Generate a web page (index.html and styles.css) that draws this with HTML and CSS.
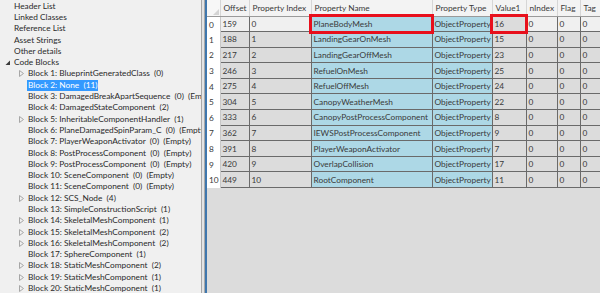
FILE: index.html
```html
<!DOCTYPE html>
<html>
<head>
  <meta name="viewport" content="width=device-width, initial-scale=1">
  <title>Asset Viewer</title>
  <link rel="stylesheet" href="styles.css">
</head>
<body>
  <div id="tree">
    <div class="node"><span class="exp"></span><span class="label">Header List</span></div>
    <div class="node"><span class="exp"></span><span class="label">Linked Classes</span></div>
    <div class="node"><span class="exp"></span><span class="label">Reference List</span></div>
    <div class="node"><span class="exp"></span><span class="label">Asset Strings</span></div>
    <div class="node"><span class="exp"></span><span class="label">Other details</span></div>
    <div class="node"><span class="exp"><svg width="6" height="6" viewBox="0 0 6 6"><polygon points="5,0.5 5,5 0.5,5" fill="#3c3c3c"/></svg></span><span class="label">Code Blocks</span></div>
    <div class="node child"><span class="exp"><svg class="closed" width="5" height="7" viewBox="0 0 5 7"><polygon points="0.5,0.5 4.5,3.5 0.5,6.5" fill="none" stroke="#a6a6a6"/></svg></span><span class="label">Block 1: BlueprintGeneratedClass  (0)</span></div>
    <div class="node child"><span class="exp"></span><span class="label selected">Block 2: None  (11)</span></div>
    <div class="node child"><span class="exp"></span><span class="label">Block 3: DamagedBreakApartSequence  (0)  (Empty)</span></div>
    <div class="node child"><span class="exp"></span><span class="label">Block 4: DamagedStateComponent  (2)</span></div>
    <div class="node child"><span class="exp"><svg class="closed" width="5" height="7" viewBox="0 0 5 7"><polygon points="0.5,0.5 4.5,3.5 0.5,6.5" fill="none" stroke="#a6a6a6"/></svg></span><span class="label">Block 5: InheritableComponentHandler  (1)</span></div>
    <div class="node child"><span class="exp"></span><span class="label">Block 6: PlaneDamagedSpinParam_C  (0)  (Empty)</span></div>
    <div class="node child"><span class="exp"></span><span class="label">Block 7: PlayerWeaponActivator  (0)  (Empty)</span></div>
    <div class="node child"><span class="exp"></span><span class="label">Block 8: PostProcessComponent  (0)  (Empty)</span></div>
    <div class="node child"><span class="exp"></span><span class="label">Block 9: PostProcessComponent  (0)  (Empty)</span></div>
    <div class="node child"><span class="exp"></span><span class="label">Block 10: SceneComponent  (0)  (Empty)</span></div>
    <div class="node child"><span class="exp"></span><span class="label">Block 11: SceneComponent  (0)  (Empty)</span></div>
    <div class="node child"><span class="exp"><svg class="closed" width="5" height="7" viewBox="0 0 5 7"><polygon points="0.5,0.5 4.5,3.5 0.5,6.5" fill="none" stroke="#a6a6a6"/></svg></span><span class="label">Block 12: SCS_Node  (4)</span></div>
    <div class="node child"><span class="exp"></span><span class="label">Block 13: SimpleConstructionScript  (1)</span></div>
    <div class="node child"><span class="exp"><svg class="closed" width="5" height="7" viewBox="0 0 5 7"><polygon points="0.5,0.5 4.5,3.5 0.5,6.5" fill="none" stroke="#a6a6a6"/></svg></span><span class="label">Block 14: SkeletalMeshComponent  (1)</span></div>
    <div class="node child"><span class="exp"><svg class="closed" width="5" height="7" viewBox="0 0 5 7"><polygon points="0.5,0.5 4.5,3.5 0.5,6.5" fill="none" stroke="#a6a6a6"/></svg></span><span class="label">Block 15: SkeletalMeshComponent  (2)</span></div>
    <div class="node child"><span class="exp"><svg class="closed" width="5" height="7" viewBox="0 0 5 7"><polygon points="0.5,0.5 4.5,3.5 0.5,6.5" fill="none" stroke="#a6a6a6"/></svg></span><span class="label">Block 16: SkeletalMeshComponent  (2)</span></div>
    <div class="node child"><span class="exp"></span><span class="label">Block 17: SphereComponent  (1)</span></div>
    <div class="node child"><span class="exp"><svg class="closed" width="5" height="7" viewBox="0 0 5 7"><polygon points="0.5,0.5 4.5,3.5 0.5,6.5" fill="none" stroke="#a6a6a6"/></svg></span><span class="label">Block 18: StaticMeshComponent  (2)</span></div>
    <div class="node child"><span class="exp"><svg class="closed" width="5" height="7" viewBox="0 0 5 7"><polygon points="0.5,0.5 4.5,3.5 0.5,6.5" fill="none" stroke="#a6a6a6"/></svg></span><span class="label">Block 19: StaticMeshComponent  (1)</span></div>
    <div class="node child"><span class="exp"><svg class="closed" width="5" height="7" viewBox="0 0 5 7"><polygon points="0.5,0.5 4.5,3.5 0.5,6.5" fill="none" stroke="#a6a6a6"/></svg></span><span class="label">Block 20: StaticMeshComponent  (1)</span></div>
  </div>

  <div id="splitter"></div>

  <div id="grid">
    <table>
      <colgroup>
        <col class="c-hdr"><col class="c-offset"><col class="c-index"><col class="c-name"><col class="c-type"><col class="c-value"><col class="c-nindex"><col class="c-flag"><col class="c-tag">
      </colgroup>
      <thead>
        <tr>
          <th class="corner"><svg width="6" height="6" viewBox="0 0 6 6"><polygon points="6,0 6,6 0,6" fill="#d4d4d4"/></svg></th>
          <th>Offset</th>
          <th>Property Index</th>
          <th>Property Name</th>
          <th>Property Type</th>
          <th>Value1</th>
          <th>nIndex</th>
          <th>Flag</th>
          <th>Tag</th>
        </tr>
      </thead>
      <tbody>
        <tr class="current"><td class="rownum">0</td><td>159</td><td>0</td><td class="blue focus">PlaneBodyMesh</td><td class="blue">ObjectProperty</td><td class="focus dim">16</td><td>0</td><td>0</td><td>0</td></tr>
        <tr><td class="rownum">1</td><td>188</td><td>1</td><td class="blue">LandingGearOnMesh</td><td class="blue">ObjectProperty</td><td>15</td><td>0</td><td>0</td><td>0</td></tr>
        <tr><td class="rownum">2</td><td>217</td><td>2</td><td class="blue">LandingGearOffMesh</td><td class="blue">ObjectProperty</td><td>23</td><td>0</td><td>0</td><td>0</td></tr>
        <tr><td class="rownum">3</td><td>246</td><td>3</td><td class="blue">RefuelOnMesh</td><td class="blue">ObjectProperty</td><td>25</td><td>0</td><td>0</td><td>0</td></tr>
        <tr><td class="rownum">4</td><td>275</td><td>4</td><td class="blue">RefuelOffMesh</td><td class="blue">ObjectProperty</td><td>24</td><td>0</td><td>0</td><td>0</td></tr>
        <tr><td class="rownum">5</td><td>304</td><td>5</td><td class="blue">CanopyWeatherMesh</td><td class="blue">ObjectProperty</td><td>22</td><td>0</td><td>0</td><td>0</td></tr>
        <tr><td class="rownum">6</td><td>333</td><td>6</td><td class="blue">CanopyPostProcessComponent</td><td class="blue">ObjectProperty</td><td>8</td><td>0</td><td>0</td><td>0</td></tr>
        <tr><td class="rownum">7</td><td>362</td><td>7</td><td class="blue">IEWSPostProcessComponent</td><td class="blue">ObjectProperty</td><td>9</td><td>0</td><td>0</td><td>0</td></tr>
        <tr><td class="rownum">8</td><td>391</td><td>8</td><td class="blue">PlayerWeaponActivator</td><td class="blue">ObjectProperty</td><td>7</td><td>0</td><td>0</td><td>0</td></tr>
        <tr><td class="rownum">9</td><td>420</td><td>9</td><td class="blue">OverlapCollision</td><td class="blue">ObjectProperty</td><td>17</td><td>0</td><td>0</td><td>0</td></tr>
        <tr><td class="rownum">10</td><td>449</td><td>10</td><td class="blue">RootComponent</td><td class="blue">ObjectProperty</td><td>11</td><td>0</td><td>0</td><td>0</td></tr>
      </tbody>
    </table>
  </div>
</body>
</html>
```

FILE: styles.css
```css
html, body {
  margin: 0;
  height: 100%;
}

body {
  display: flex;
  width: 600px;
  height: 293px;
  overflow: hidden;
  font-family: Lato, "Noto Sans", sans-serif;
  color: #2a2a2a;
  background: #f0f0f0;
}

/* left tree */
#tree {
  width: 201px;
  flex: none;
  overflow: hidden;
  white-space: nowrap;
  font-size: 8.3px;
  padding-top: 0.5px;
}

.node {
  display: flex;
  align-items: center;
  height: 11.3px;
  line-height: 11px;
}

.node.child {
  padding-left: 14px;
}

.exp {
  width: 14px;
  flex: none;
  display: flex;
  align-items: center;
  padding-left: 5px;
  box-sizing: border-box;
}

.exp svg {
  display: block;
}

.label {
  white-space: pre;
}

.label.selected {
  background: #3399ff;
  color: white;
  padding: 0 1px;
  margin-left: -1px;
}

/* splitter between tree and grid */
#splitter {
  width: 2px;
  flex: none;
  border-left: 1px solid #a9a9a9;
  border-right: 1px solid #a9a9a9;
  background: #e4e4e4;
}

/* data grid */
#grid {
  flex: 1;
  overflow: hidden;
  background: #dcdcdc;
  border-left: 2px solid #3f77ad;
}

table {
  border-collapse: collapse;
  table-layout: fixed;
  width: 403px;
  font-size: 8.3px;
  color: #3a3a3a;
}

.c-hdr { width: 13px; }
.c-offset { width: 29px; }
.c-index { width: 62px; }
.c-name { width: 121px; }
.c-type { width: 60px; }
.c-value { width: 34px; }
.c-nindex { width: 31px; }
.c-flag { width: 23px; }
.c-tag { width: 30px; }

th, td {
  padding: 0 0 0 2px;
  overflow: hidden;
  white-space: nowrap;
  text-align: left;
}

thead tr {
  height: 16px;
}

th {
  font-weight: normal;
  background: #f3f3f3;
  border-right: 1px solid #d6d6d6;
  border-bottom: 1px solid #9a9a9a;
  padding-left: 3px;
}

th.corner {
  background: #f7f7f7;
  vertical-align: bottom;
  text-align: right;
  padding: 0 1px 1px 0;
}

th.corner svg {
  display: inline-block;
  vertical-align: bottom;
}

tbody tr {
  height: 15.6px;
}

td {
  background: #dcdcdc;
  border: 1px solid #6a6a6a;
}

td.rownum {
  background: white;
  border: none;
  border-right: 1px solid #c8c8c8;
  padding-left: 2px;
  padding-top: 1px;
}

td.blue {
  background: #add8e6;
}

tr.current td {
  background: #f0f0f0;
}

tr.current td.blue {
  background: #add8e6;
}

tr.current td.dim {
  background: #dcdcdc;
}

tr.current td.rownum {
  background: white;
}

td.focus {
  outline: 3px solid #e8101c;
  outline-offset: -1px;
}
```
